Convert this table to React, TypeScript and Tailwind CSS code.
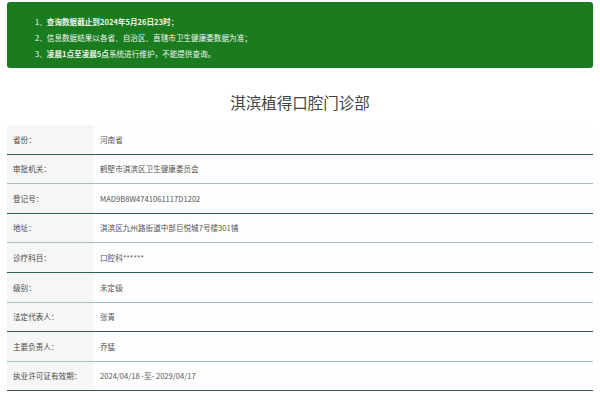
export default function App() {
  const rows: [string, string][] = [
    ["省份：", "河南省"],
    ["审批机关：", "鹤壁市淇滨区卫生健康委员会"],
    ["登记号：", "MAD9B8W4741061117D1202"],
    ["地址：", "淇滨区九州路街道中部巨悦城7号楼301铺"],
    ["诊疗科目：", "口腔科******"],
    ["级别：", "未定级"],
    ["法定代表人：", "张青"],
    ["主要负责人：", "乔猛"],
    ["执业许可证有效期：", "2024/04/18 -至- 2029/04/17"],
  ];

  return (
    <div className="w-[600px] h-[400px] overflow-hidden bg-white px-[7px] pt-[2px] font-['Noto_Sans_CJK_SC','Liberation_Sans',sans-serif]">
      <div className="h-[66px] rounded-[3px] bg-[#1a7c1f] pl-[28px] pt-[12px] text-[7.6px] leading-[16px] text-[#eef6ee]">
        <p>
          1、<span className="font-bold">查询数据截止到2024年5月26日23时</span>；
        </p>
        <p>2、信息数据结果以各省、自治区、直辖市卫生健康委数据为准；</p>
        <p>
          3、<span className="font-bold">凌晨1点至凌晨5点</span>系统进行维护，不能提供查询。
        </p>
      </div>

      <h1 className="h-[57px] pt-[22px] text-center text-[15.5px] leading-[24px] text-[#444]">
        淇滨植得口腔门诊部
      </h1>

      <div className="flex flex-col">
        {rows.map(([label, value], i) => (
          <div
            key={label}
            className={
              i % 2 === 0
                ? "flex h-[29.6px] border-b border-[#2f6050] text-[7.6px]"
                : "flex h-[29.6px] border-b border-[#a8c0b4] text-[7.6px]"
            }
          >
            <div className="flex w-[86px] items-center bg-[#f6f6f6] pl-[6px] text-[#4a4a4a]">{label}</div>
            <div className="flex flex-1 items-center bg-[#fdfdfd] pl-[7px] text-[#555]">{value}</div>
          </div>
        ))}
      </div>
    </div>
  );
}
